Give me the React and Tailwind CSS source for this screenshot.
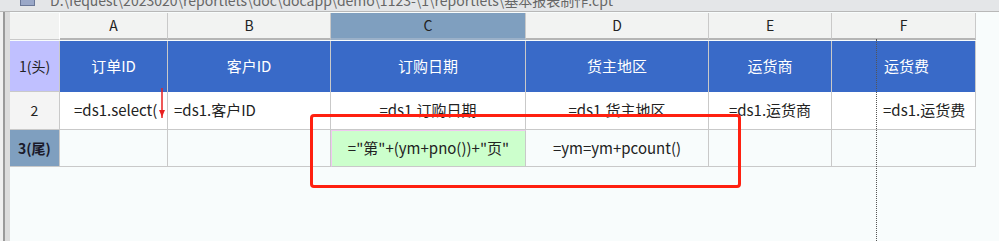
import React from "react";

const cols = [
  { key: "A", w: "w-[108px]" },
  { key: "B", w: "w-[163px]" },
  { key: "C", w: "w-[195px]" },
  { key: "D", w: "w-[183px]" },
  { key: "E", w: "w-[123px]" },
  { key: "F", w: "w-[144px]" },
];

const heads = ["订单ID", "客户ID", "订购日期", "货主地区", "运货商", "运货费"];

function Cell({ w, className, children }) {
  return (
    <div className={`${w} shrink-0 flex items-center border-r border-b border-[#c9c9c9] overflow-hidden whitespace-nowrap ${className}`}>
      {children}
    </div>
  );
}

export default function App() {
  return (
    <div
      className="relative w-[999px] h-[241px] bg-[#f8fcfc] overflow-hidden text-[15px] text-[#222]"
      style={{ fontFamily: '"Microsoft YaHei", "Noto Sans CJK SC", "Noto Sans", sans-serif' }}
    >
      {/* title bar */}
      <div className="h-[12px] bg-[#e4e6e8] border-b border-[#b8b8b8] flex items-end overflow-hidden">
        <div className="ml-[20px] mb-[5px] w-[15px] h-[8px] bg-[#9aa8c8] border border-[#6a7898]"></div>
        <div className="ml-[15px] leading-[14px] mb-[4px] text-[#666] text-[14px]">
          D:\fequest\2023020\reportlets\doc\docapp\demo\1123-\1\reportlets\基本报表制作.cpt
        </div>
      </div>

      <div className="flex h-[229px]">
        <div className="w-[10px] shrink-0 bg-[#dcdcdc] border-l-[3px] border-l-[#f0f0f0] flex">
          <div className="w-[2px] bg-[#9a9a9a]"></div>
        </div>

        <div className="flex flex-col">
          {/* column header */}
          <div className="flex h-[27px] mt-[1px] text-[14px]">
            <Cell w="w-[50px]" className="bg-[#f2f3f2] border-r-[#ffffff]"></Cell>
            {cols.map((c) => (
              <Cell
                key={c.key}
                w={c.w}
                className={`justify-center border-b-[2px] ${c.key === "C" ? "bg-[#7f9fbf] border-b-[#9ab0c8]" : "bg-[#f2f3f2] border-b-[#b5b5b5]"}`}
              >
                {c.key}
              </Cell>
            ))}
          </div>

          {/* row 1 */}
          <div className="flex h-[51px] mt-[1px]">
            <Cell w="w-[50px]" className="justify-center bg-[#c0c0ff] text-[14px]">1(头)</Cell>
            {cols.map((c, i) => (
              <Cell
                key={c.key}
                w={c.w}
                className={`bg-[#396ac8] text-white border-b-0 ${c.key === "F" ? "pl-[52px]" : "justify-center"}`}
              >
                {heads[i]}
              </Cell>
            ))}
          </div>

          {/* row 2 */}
          <div className="flex h-[38px]">
            <Cell w="w-[50px]" className="justify-center bg-[#f4f4f4] text-[14px]">2</Cell>
            <Cell w="w-[108px]" className="bg-white pl-[14px]">=ds1.select(</Cell>
            <Cell w="w-[163px]" className="bg-white pl-[6px]">=ds1.客户ID</Cell>
            <Cell w="w-[195px]" className="bg-white justify-center">=ds1.订购日期</Cell>
            <Cell w="w-[183px]" className="bg-white justify-center">=ds1.货主地区</Cell>
            <Cell w="w-[123px]" className="bg-white justify-center">=ds1.运货商</Cell>
            <Cell w="w-[144px]" className="bg-white pl-[51px]">=ds1.运货费</Cell>
          </div>

          {/* row 3 */}
          <div className="flex h-[37px]">
            <Cell w="w-[50px]" className="justify-center bg-[#7f9fbf] font-bold text-[#1a1a2a] text-[14px]">3(尾)</Cell>
            <Cell w="w-[108px]" className="bg-[#f8fcfc]"></Cell>
            <Cell w="w-[163px]" className="bg-[#f8fcfc]"></Cell>
            <Cell w="w-[195px]" className="bg-[#ccffcc] justify-center border-l border-l-[#f0c8f0] border-t border-t-[#f0c8f0]">
              ="第"+(ym+pno())+"页"
            </Cell>
            <Cell w="w-[183px]" className="bg-[#f8fcfc] justify-center">=ym=ym+pcount()</Cell>
            <Cell w="w-[123px]" className="bg-[#f8fcfc]"></Cell>
            <Cell w="w-[144px]" className="bg-[#f8fcfc]"></Cell>
          </div>
        </div>
      </div>

      {/* dotted page break line */}
      <div className="absolute left-[876px] top-[39px] h-[202px] border-l border-dotted border-[#555]"></div>

      {/* red arrow in A2 */}
      <svg className="absolute left-[157px] top-[88px]" width="10" height="32" viewBox="0 0 10 32">
        <line x1="5" y1="0" x2="5" y2="30" stroke="#e82020" strokeWidth="1.5" />
        <path d="M2 22 L5 29 L8 22 Z" fill="#e82020" />
      </svg>

      {/* red highlight box */}
      <div className="absolute left-[310px] top-[114px] w-[431px] h-[74px] border-[3px] border-[#ff2010] rounded-[4px]"></div>
    </div>
  );
}
